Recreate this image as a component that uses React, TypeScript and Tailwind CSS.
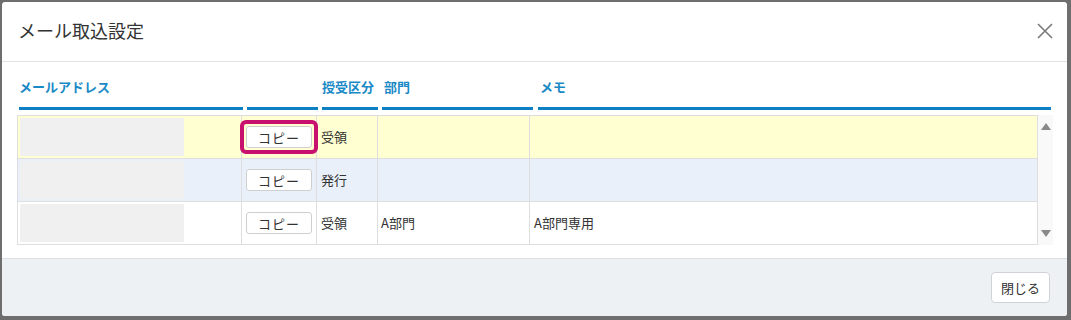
import React from "react";

const rows = [
  { bg: "bg-[#ffffd2]", kind: "受領", dept: "", memo: "", active: true },
  { bg: "bg-[#e9f0fa]", kind: "発行", dept: "", memo: "", active: false },
  { bg: "bg-white", kind: "受領", dept: "A部門", memo: "A部門専用", active: false },
];

const font = { fontFamily: '"Noto Sans CJK JP", "Noto Sans", sans-serif' };

export default function App() {
  return (
    <div className="w-[1071px] h-[320px] bg-[#6e6e6e] pl-[2px] pt-[2px]" style={font}>
      <div className="w-[1065px] h-[314px] bg-white rounded-[3px] overflow-hidden flex flex-col">
        {/* header */}
        <div className="h-[60px] border-b border-[#e2e2e2] flex items-center justify-between pl-[16px] pr-[14px] pb-[3px] shrink-0">
          <h1 className="text-[18px] text-[#333] leading-none">メール取込設定</h1>
          <svg width="16" height="16" viewBox="0 0 16 16" className="mt-[1px]">
            <path d="M1 1 L15 15 M15 1 L1 15" stroke="#7a7a7a" strokeWidth="1.6" fill="none" />
          </svg>
        </div>

        {/* body */}
        <div className="flex-1 pl-[15px]">
          <div className="flex pl-[2px] pt-[16px] text-[13px] font-bold text-[#1a8ac6] leading-[18px]">
            <div className="w-[224px] pb-[11px] border-b-[3px] border-[#0b80c2]">メールアドレス</div>
            <div className="w-[71px] ml-[4px] border-b-[3px] border-[#0b80c2]"></div>
            <div className="w-[56px] ml-[4px] border-b-[3px] border-[#0b80c2]">授受区分</div>
            <div className="w-[151px] ml-[4px] pl-[2px] border-b-[3px] border-[#0b80c2]">部門</div>
            <div className="w-[513px] ml-[5px] pl-[2px] border-b-[3px] border-[#0b80c2]">メモ</div>
          </div>

          <div className="flex mt-[5px]">
            <div className="w-[1021px] border border-[#dedede]">
              {rows.map((r, i) => (
                <div
                  key={i}
                  className={`flex text-[13px] text-[#333] ${r.bg} ${i < rows.length - 1 ? "h-[43px] border-b border-[#dedede]" : "h-[42px]"}`}
                >
                  <div className="w-[224px] flex items-center pl-[2px] border-r border-[#dedede]">
                    <div className="w-[164px] h-[38px] bg-[#f0f0f0]"></div>
                  </div>
                  <div className="relative w-[75px] flex items-center pl-[4px] border-r border-[#dedede]">
                    <button className="w-[66px] h-[22px] bg-white border border-[#cfcfcf] rounded-[3px] text-[13px] text-[#333] leading-none tracking-[1px]">
                      コピー
                    </button>
                    {r.active && (
                      <div className="absolute left-[-2px] top-[4px] w-[78px] h-[34px] border-[4px] border-[#c8106e] rounded-[6px]"></div>
                    )}
                  </div>
                  <div className="w-[61px] flex items-center pl-[4px] border-r border-[#dedede]">{r.kind}</div>
                  <div className="w-[152px] flex items-center pl-[3px] border-r border-[#dedede]">{r.dept}</div>
                  <div className="flex-1 flex items-center pl-[4px]">{r.memo}</div>
                </div>
              ))}
            </div>
            <div className="w-[15px] bg-[#f9f9f9] flex flex-col items-center justify-between py-[8px]">
              <svg width="10" height="7" viewBox="0 0 10 7">
                <path d="M5 0 L10 7 L0 7 Z" fill="#8a8a8a" />
              </svg>
              <svg width="10" height="7" viewBox="0 0 10 7">
                <path d="M0 0 L10 0 L5 7 Z" fill="#8a8a8a" />
              </svg>
            </div>
          </div>
        </div>

        {/* footer */}
        <div className="h-[58px] shrink-0 border-t border-[#dcdfe3] bg-[#eef1f4] flex items-center justify-end pr-[17px]">
          <button className="w-[59px] h-[31px] bg-white border border-[#cfd3d7] rounded-[4px] text-[13px] text-[#333]">
            閉じる
          </button>
        </div>
      </div>
    </div>
  );
}
